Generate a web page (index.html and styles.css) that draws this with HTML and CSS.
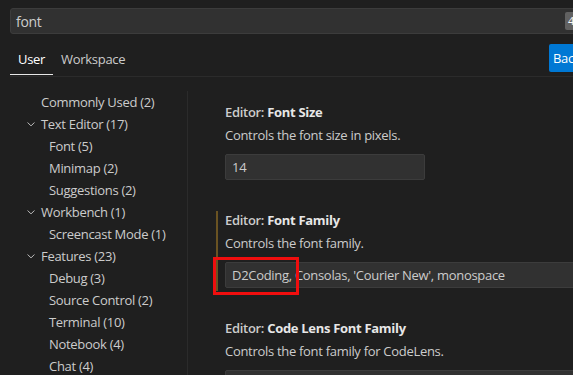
FILE: index.html
```html
<!DOCTYPE html>
<html lang="en">
<head>
<meta charset="utf-8">
<title>Settings</title>
<link rel="stylesheet" href="styles.css">
</head>
<body>
<div class="page">
  <div class="search">
    <span class="query">font</span>
    <span class="badge">4 Settings Found</span>
  </div>
  <div class="tabs-row">
    <div class="tabs">
      <span class="tab active">User</span>
      <span class="tab">Workspace</span>
    </div>
    <button class="sync">Backup and Sync Settings</button>
  </div>
  <div class="main">
    <nav class="toc">
      <div class="row l0 leaf">Commonly Used (2)</div>
      <div class="row l0"><svg class="chev" viewBox="0 0 16 16"><path d="M3.5 6 L8 10.5 L12.5 6"/></svg>Text Editor (17)</div>
      <div class="row l1">Font (5)</div>
      <div class="row l1">Minimap (2)</div>
      <div class="row l1">Suggestions (2)</div>
      <div class="row l0"><svg class="chev" viewBox="0 0 16 16"><path d="M3.5 6 L8 10.5 L12.5 6"/></svg>Workbench (1)</div>
      <div class="row l1">Screencast Mode (1)</div>
      <div class="row l0"><svg class="chev" viewBox="0 0 16 16"><path d="M3.5 6 L8 10.5 L12.5 6"/></svg>Features (23)</div>
      <div class="row l1">Debug (3)</div>
      <div class="row l1">Source Control (2)</div>
      <div class="row l1">Terminal (10)</div>
      <div class="row l1">Notebook (4)</div>
      <div class="row l1">Chat (4)</div>
    </nav>
    <section class="settings">
      <div class="item">
        <div class="inner">
          <div class="title">Editor: <b>Font Size</b></div>
          <div class="desc">Controls the font size in pixels.</div>
          <div class="field short"><span>14</span></div>
        </div>
      </div>
      <div class="item">
        <div class="inner modified">
          <div class="title">Editor: <b>Font Family</b></div>
          <div class="desc">Controls the font family.</div>
          <div class="field long"><span>D2Coding, Consolas, 'Courier New', monospace</span><span class="mark"></span></div>
        </div>
      </div>
      <div class="item">
        <div class="inner">
          <div class="title">Editor: <b>Code Lens Font Family</b></div>
          <div class="desc">Controls the font family for CodeLens.</div>
          <div class="field long"><span></span></div>
        </div>
      </div>
    </section>
  </div>
</div>
</body>
</html>
```
FILE: styles.css
```css
* { box-sizing: border-box; }
html, body {
  margin: 0;
  background: #1f1f1f;
  overflow: hidden;
}
body {
  font-family: "Open Sans", "Noto Sans", sans-serif;
  font-size: 13px;
  letter-spacing: -0.3px;
  color: #cccccc;
  height: 375px;
}
.page {
  width: 760px;
}
.search {
  margin: 8px 0 0 10px;
  width: 700px;
  height: 26px;
  background: #313131;
  border: 1px solid #3c3c3c;
  border-radius: 3px;
  display: flex;
  align-items: center;
  padding: 0 5px;
}
.query {
  flex: none;
  width: 549px;
  font-size: 14px;
  color: #cccccc;
}
.badge {
  background: #616161;
  color: #f8f8f8;
  font-size: 11px;
  letter-spacing: 0;
  height: 18px;
  line-height: 18px;
  padding: 0 3px;
  border-radius: 2px;
  white-space: nowrap;
}
.tabs-row {
  display: grid;
  grid-template-columns: 539px auto;
  align-items: start;
  margin-left: 10px;
  height: 43px;
  border-bottom: 1px solid #2b2b2b;
}
.tabs {
  display: flex;
  padding-top: 16px;
}
.tab {
  padding: 0 8px 6px;
  line-height: 18px;
  color: #cccccc;
  border-bottom: 1px solid transparent;
}
.tab.active {
  color: #ffffff;
  border-bottom-color: #e7e7e7;
}
.sync {
  margin-top: 10px;
  height: 28px;
  width: 200px;
  text-align: left;
  padding: 0 4px;
  border: 0;
  border-radius: 2px;
  background: #0078d4;
  color: #ffffff;
  font: inherit;
  letter-spacing: inherit;
  white-space: nowrap;
}
.main {
  display: flex;
  padding-top: 14px;
}
.toc {
  width: 188px;
  border-right: 1px solid #2b2b2b;
  height: 300px;
  flex: none;
}
.row {
  height: 22px;
  line-height: 22px;
  display: flex;
  align-items: center;
  white-space: nowrap;
}
.row.l0 { padding-left: 25px; }
.row.l0.leaf { padding-left: 41px; }
.row.l1 { padding-left: 49px; }
.chev {
  width: 12px;
  height: 12px;
  margin-right: 4px;
  fill: none;
  stroke: #c5c5c5;
  stroke-width: 1.3;
}
.settings {
  padding: 3px 0 0 28px;
  flex: 1;
}
.item {
  padding: 9px 0 19px 0;
}
.inner {
  border-left: 2px solid transparent;
  padding: 0 0 3px 7px;
}
.inner.modified {
  border-left-color: #6a5322;
}
.title {
  line-height: 18px;
  font-weight: 600;
  color: #cccccc;
}
.title b {
  font-weight: 700;
  color: #e7e7e7;
}
.desc {
  line-height: 18px;
  margin-top: 5px;
}
.field {
  margin-top: 10px;
  height: 26px;
  background: #313131;
  border: 1px solid #3c3c3c;
  border-radius: 2px;
  padding: 0 6px;
  line-height: 24px;
  position: relative;
  white-space: nowrap;
}
.field.short { width: 200px; }
.field.long { width: 500px; }
.mark {
  position: absolute;
  left: -13px;
  top: -6px;
  width: 86px;
  height: 38px;
  border: 3px solid #f00e0e;
}
```
